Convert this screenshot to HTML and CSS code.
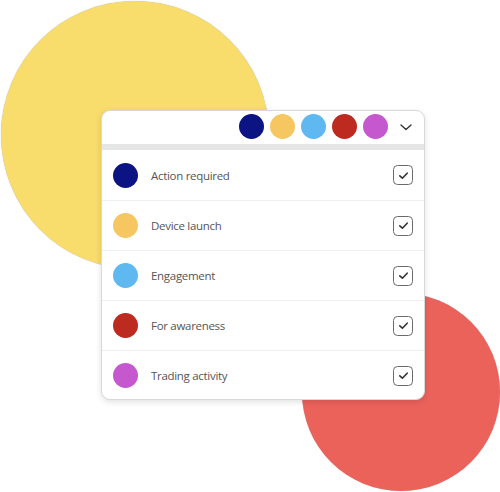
FILE: index.html
```html
<!DOCTYPE html>
<html lang="en">
<head>
    <meta charset="UTF-8">
    <meta name="viewport" content="width=device-width, initial-scale=1.0">
    <title>Tag filter</title>
    <link rel="stylesheet" href="styles.css">
</head>
<body>
    <div class="stage">
        <!-- background blobs -->
        <div class="blob blob-yellow"></div>
        <div class="blob blob-red"></div>

        <div class="card">
            <div class="card-head">
                <span class="dot dot-navy"></span>
                <span class="dot dot-amber"></span>
                <span class="dot dot-sky"></span>
                <span class="dot dot-red"></span>
                <span class="dot dot-purple"></span>
                <svg class="chevron" width="14" height="14" viewBox="0 0 14 14">
                    <path d="M2 5 L7 9.5 L12 5" fill="none" stroke="#333" stroke-width="1.4" stroke-linecap="round" stroke-linejoin="round"/>
                </svg>
            </div>
            <div class="card-bar"></div>
            <ul class="tag-list">
                <li><span class="dot dot-navy"></span><span class="label">Action required</span><span class="check"></span></li>
                <li><span class="dot dot-amber"></span><span class="label">Device launch</span><span class="check"></span></li>
                <li><span class="dot dot-sky"></span><span class="label">Engagement</span><span class="check"></span></li>
                <li><span class="dot dot-red"></span><span class="label">For awareness</span><span class="check"></span></li>
                <li><span class="dot dot-purple"></span><span class="label">Trading activity</span><span class="check"></span></li>
            </ul>
        </div>
    </div>

    <script>
        // draw the tick inside every checkbox
        document.querySelectorAll('.check').forEach(function(box) {
            box.innerHTML = '<svg width="13" height="13" viewBox="0 0 13 13"><path d="M2.8 6.8 L5.4 9.2 L10.2 4.2" fill="none" stroke="#333" stroke-width="1.6" stroke-linecap="round" stroke-linejoin="round"/></svg>';
        });
    </script>
</body>
</html>
```

FILE: styles.css
```css
body {
    margin: 0;
    font-family: "Open Sans", "Noto Sans", sans-serif;
    background: #fff;
}
.stage {
    position: relative;
    width: 500px;
    height: 492px;
    padding: 110px 0 0 101px;
    box-sizing: border-box;
    overflow: hidden;
}
.blob {
    position: absolute;
    border-radius: 50%;
}
.blob-yellow {
    left: 1px;
    top: 1px;
    width: 268px;
    height: 268px;
    background: #f8dc6c;
    box-shadow: 0 0 1px rgba(0,0,0,0.35);
}
.blob-red {
    left: 302px;
    top: 293px;
    width: 198px;
    height: 198px;
    background: #eb625b;
    box-shadow: 0 0 1px rgba(0,0,0,0.3);
}
.card {
    position: relative;
    width: 324px;
    height: 290px;
    background: #fff;
    border: 1px solid #d8d8d8;
    border-radius: 9px;
    box-sizing: border-box;
    box-shadow: 0 2px 6px rgba(0,0,0,0.12);
    overflow: hidden;
}
.card-head {
    height: 33px;
    display: flex;
    align-items: center;
    justify-content: flex-end;
    gap: 6px;
    padding: 0 11px 2px 0;
    box-sizing: border-box;
}
.card-head .chevron {
    margin-left: 5px;
}
.card-bar {
    height: 6px;
    background: #e6e6e6;
}
.dot {
    display: inline-block;
    width: 25px;
    height: 25px;
    border-radius: 50%;
    flex: none;
}
.dot-navy { background: #0c1382; }
.dot-amber { background: #f6c660; }
.dot-sky { background: #5fb8f0; }
.dot-red { background: #bc2a20; }
.dot-purple { background: #c558cf; }
.tag-list {
    list-style: none;
    margin: 0;
    padding: 0;
}
.tag-list li {
    height: 50px;
    display: flex;
    align-items: center;
    padding: 0 11px 0 11px;
    border-top: 1px solid #efefef;
    box-sizing: border-box;
}
.tag-list li:first-child {
    border-top: none;
}
.label {
    flex: 1;
    margin-left: 13px;
    font-size: 11.5px;
    letter-spacing: -0.3px;
    color: #555;
}
.check {
    width: 20px;
    height: 20px;
    border: 1.3px solid #6a6a6a;
    border-radius: 4.5px;
    box-sizing: border-box;
    display: flex;
    align-items: center;
    justify-content: center;
}
.check svg {
    display: block;
}
```
